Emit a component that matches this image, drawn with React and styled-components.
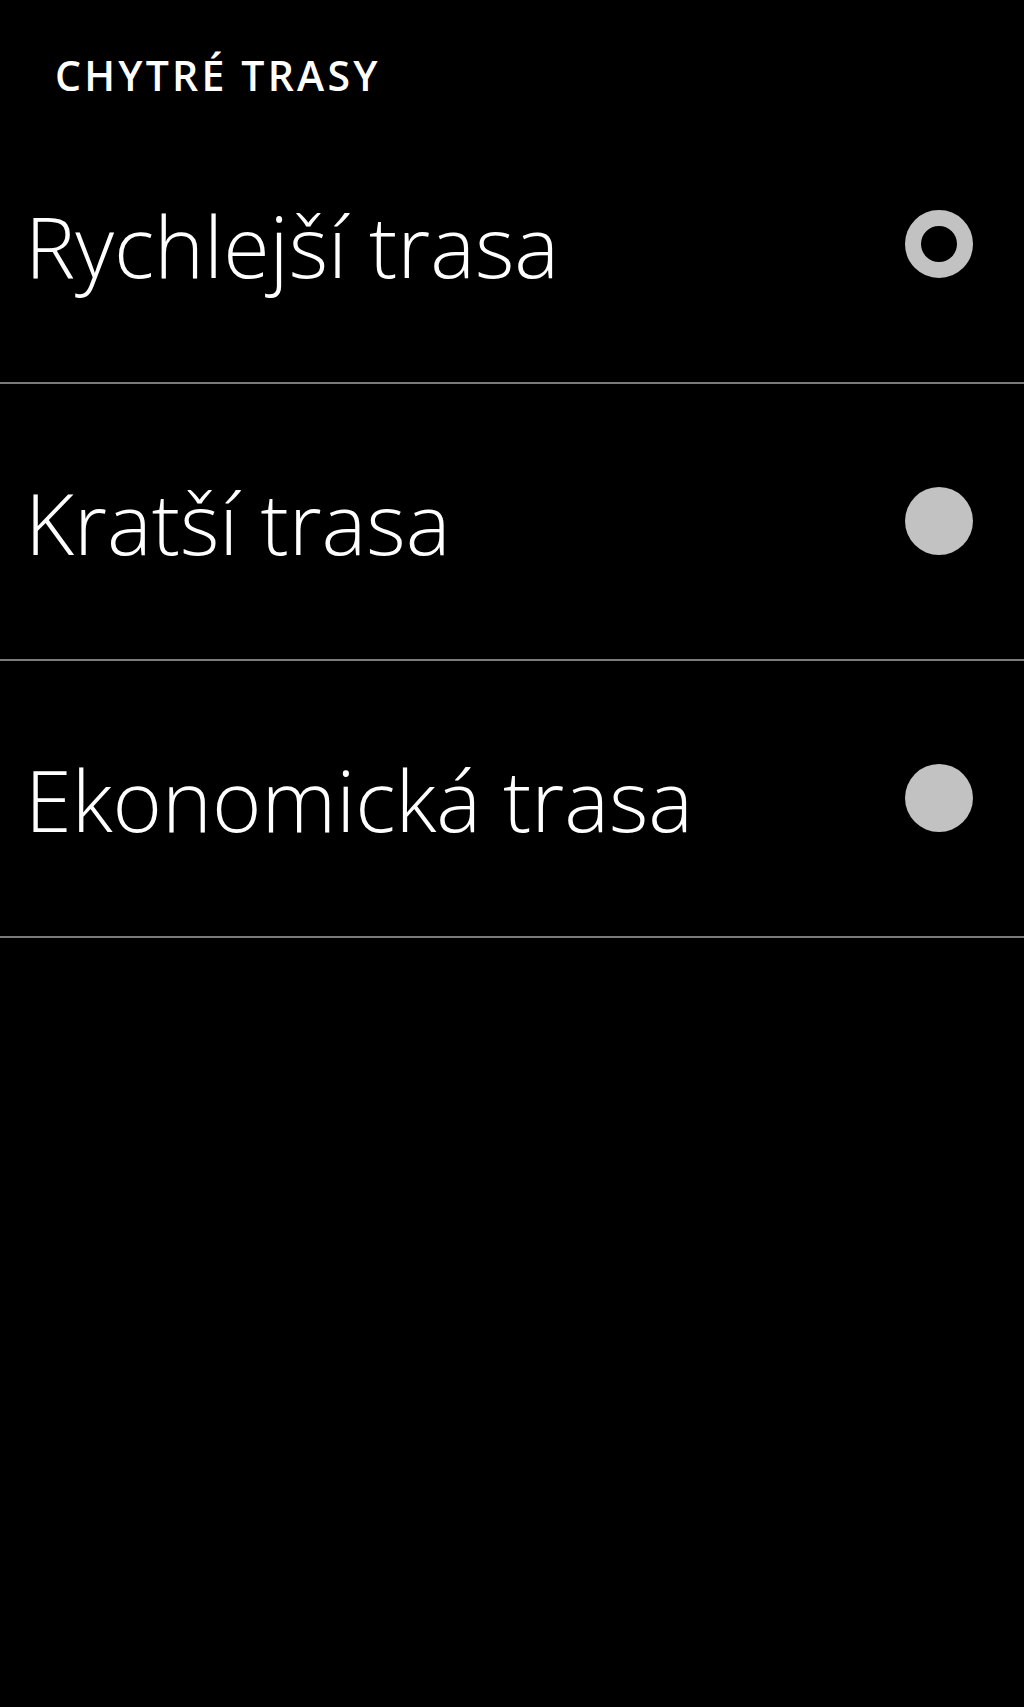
import styled, { createGlobalStyle } from "styled-components";

const GlobalStyle = createGlobalStyle`
  html, body {
    margin: 0;
    padding: 0;
    background: #000;
  }
  body {
    font-family: "Open Sans", "Noto Sans", sans-serif;
    color: #fff;
  }
`;

const Page = styled.div`
  width: 1024px;
  min-height: 1707px;
  background: #000;
  display: flex;
  flex-direction: column;
`;

const Header = styled.h1`
  margin: 0;
  height: 107px;
  box-sizing: border-box;
  padding: 55px 0 0 55px;
  font-size: 41px;
  line-height: 1;
  font-weight: 600;
  letter-spacing: 3.2px;
  color: #fff;
`;

const List = styled.div`
  display: flex;
  flex-direction: column;
`;

const Row = styled.label`
  height: 277px;
  box-sizing: border-box;
  border-bottom: 2px solid #7a7a7a;
  display: flex;
  align-items: center;
  justify-content: space-between;
  padding: 0 51px 0 25px;
  cursor: pointer;
`;

const RowLabel = styled.span`
  font-size: 84.5px;
  font-weight: 300;
  line-height: 1;
  color: #fff;
  padding-top: 3px;
`;

const Radio = styled.span`
  width: 68px;
  height: 68px;
  margin-bottom: 2px;
  border-radius: 50%;
  box-sizing: border-box;
  background: ${p => (p.$checked ? "transparent" : "#c2c2c2")};
  border: ${p => (p.$checked ? "16.5px solid #c2c2c2" : "none")};
  flex-shrink: 0;
`;

const options = [
  { label: "Rychlejší trasa", checked: true },
  { label: "Kratší trasa", checked: false },
  { label: "Ekonomická trasa", checked: false },
];

export default function App() {
  return (
    <>
      <GlobalStyle />
      <Page>
        <Header>CHYTRÉ TRASY</Header>
        <List>
          {options.map(o => (
            <Row key={o.label}>
              <RowLabel>{o.label}</RowLabel>
              <Radio $checked={o.checked} />
            </Row>
          ))}
        </List>
      </Page>
    </>
  );
}
